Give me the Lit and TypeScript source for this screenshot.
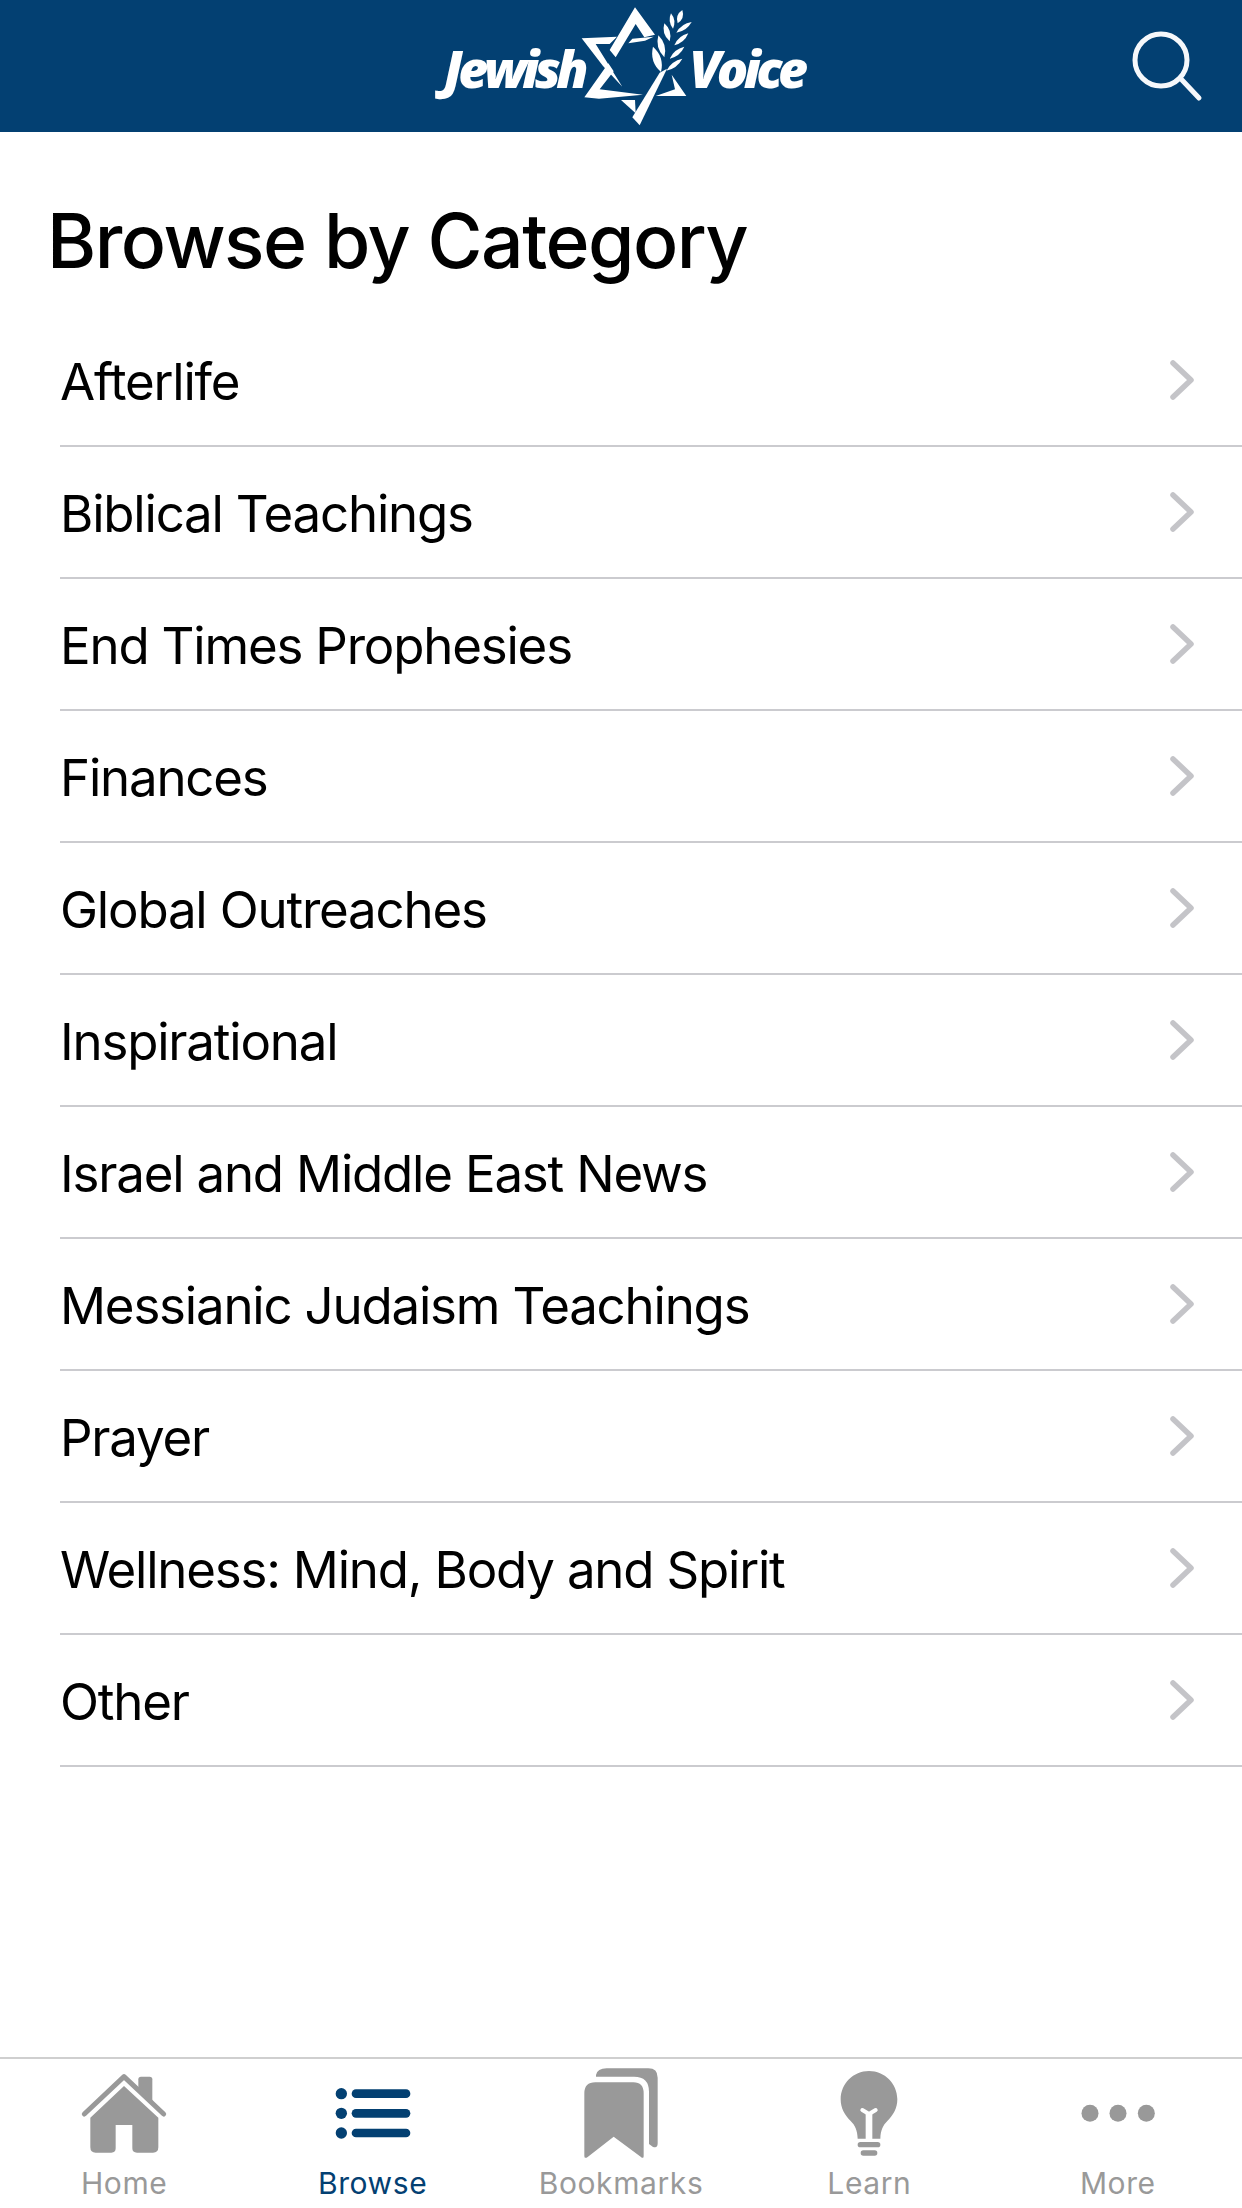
import { LitElement, html, css, svg } from "lit";
import { customElement } from "lit/decorators.js";

const categories = [
  "Afterlife",
  "Biblical Teachings",
  "End Times Prophesies",
  "Finances",
  "Global Outreaches",
  "Inspirational",
  "Israel and Middle East News",
  "Messianic Judaism Teachings",
  "Prayer",
  "Wellness: Mind, Body and Spirit",
  "Other",
];

const tabs = [
  {
    label: "Home",
    box: "229 75 288 288",
    art: svg`<polyline points="254,222 373,110 492,222" fill="none" stroke="currentColor" stroke-width="15" stroke-linecap="round" stroke-linejoin="round"/>
      <path d="M416 150V118Q416 110 424 110H450Q458 110 458 118V190Z"/>
      <path d="M373 138L476 233V322Q476 338 460 338H412Q398 338 398 325V255H348V325Q348 338 335 338H288Q272 338 272 322V233Z"/>`,
  },
  {
    label: "Browse",
    box: "974 75 288 288",
    art: svg`<circle cx="1023" cy="161" r="17"/><circle cx="1023" cy="220" r="17"/><circle cx="1023" cy="279" r="17"/>
      <rect x="1054" y="148" width="176" height="26" rx="13"/><rect x="1054" y="207" width="176" height="26" rx="13"/><rect x="1054" y="266" width="176" height="26" rx="13"/>`,
  },
  {
    label: "Bookmarks",
    box: "279 75 288 288",
    art: svg`<path d="M348 105Q352 85 380 85H505Q533 85 533 113V310Q533 326 518 320L507 312V155Q507 110 462 110H348Z"/>
      <path d="M313 160Q313 127 346 127H460Q491 127 491 160V348Q491 358 482 350L401 290L324 350Q313 358 313 348Z"/>`,
  },
  {
    label: "Learn",
    box: "1026 75 288 288",
    art: svg`<path d="M1170 93C1217 93 1255 131 1255 178C1255 205 1243 225 1225 243C1212 256 1205 270 1204 296H1136C1135 270 1128 256 1115 243C1097 225 1085 205 1085 178C1085 131 1123 93 1170 93Z"/>
      <polyline points="1150,210 1170,222 1190,210" fill="none" stroke="#fff" stroke-width="12" stroke-linecap="round" stroke-linejoin="round"/>
      <rect x="1160" y="220" width="20" height="78" fill="#fff"/>
      <rect x="1136" y="306" width="68" height="16" rx="8"/><rect x="1145" y="331" width="50" height="16" rx="8"/>`,
  },
  {
    label: "More",
    box: "328 75 288 288",
    art: svg`<circle cx="388" cy="220" r="25.5"/><circle cx="472" cy="220" r="25.5"/><circle cx="557" cy="220" r="25.5"/>`,
  },
];

// wheat grains on the logo: from, to, half bulge
const grains = [
  [850, 30, 836, 70, 16],
  [816, 40, 822, 86, 14],
  [878, 66, 832, 98, 14],
  [796, 70, 812, 124, 18],
  [868, 100, 826, 136, 14],
  [778, 106, 796, 172, 20],
  [856, 140, 812, 176, 14],
  [762, 140, 786, 216, 24],
  [850, 176, 802, 212, 14],
];

function grain([x1, y1, x2, y2, w]: number[]) {
  const len = Math.hypot(x2 - x1, y2 - y1);
  const nx = (-(y2 - y1) / len) * w;
  const ny = ((x2 - x1) / len) * w;
  const cx = (x1 + x2) / 2;
  const cy = (y1 + y2) / 2;
  return `M${x1} ${y1}Q${cx + nx} ${cy + ny} ${x2} ${y2}Q${cx - nx} ${cy - ny} ${x1} ${y1}Z`;
}

@customElement("app-root")
export class AppRoot extends LitElement {
  static styles = css`
    :host {
      display: flex;
      flex-direction: column;
      height: 2208px;
      background: #fff;
      font-family: Inter, "Liberation Sans", sans-serif;
      color: #000;
    }
    .header {
      height: 132px;
      flex: none;
      background: #034072;
      display: grid;
      grid-template-columns: 1fr auto 1fr;
      align-items: center;
    }
    .logo {
      grid-column: 2;
      display: flex;
      align-items: center;
      padding-left: 5px;
      color: #fff;
      font-family: "Open Sans", "Liberation Sans", sans-serif;
      font-size: 52px;
      font-weight: 800;
      font-style: italic;
      letter-spacing: -4.5px;
      line-height: 132px;
    }
    .logo svg {
      display: block;
      width: 120px;
      height: 132px;
      flex: none;
    }
    .logo .word {
      position: relative;
      top: 2px;
    }
    .logo .jewish {
      margin-right: -5px;
    }
    .logo .voice {
      margin-left: -10px;
    }
    .search {
      grid-column: 3;
      justify-self: end;
      display: block;
      width: 142px;
      height: 132px;
    }
    .content {
      flex: 1;
    }
    h1 {
      margin: 0;
      height: 183px;
      box-sizing: border-box;
      padding: 64px 0 0 47px;
      font-size: 75px;
      line-height: 90px;
      font-weight: 500;
      letter-spacing: -1.5px;
    }
    .row {
      height: 132px;
      box-sizing: border-box;
      margin-left: 60px;
      padding-right: 46px;
      border-bottom: 2px solid #cbcbcf;
      display: flex;
      align-items: center;
      justify-content: space-between;
      font-size: 51px;
      letter-spacing: -1.2px;
    }
    .row span {
      padding-top: 3px;
    }
    .row svg {
      display: block;
      width: 30px;
      height: 44px;
      flex: none;
    }
    .tabs {
      flex: none;
      height: 151px;
      box-sizing: border-box;
      border-top: 2px solid #cfcfcf;
      display: grid;
      grid-template-columns: repeat(5, 1fr);
    }
    .tab {
      display: flex;
      flex-direction: column;
      align-items: center;
      padding-top: 6px;
      color: #999;
      font-size: 30px;
      line-height: 36px;
      letter-spacing: 0.6px;
    }
    .tab.active {
      color: #034072;
    }
    .tab svg {
      display: block;
      width: 96px;
      height: 96px;
      margin-bottom: 4px;
      fill: currentColor;
    }
  `;

  private logoMark() {
    return html`<svg viewBox="540 0 360 396" fill="#fff" aria-hidden="true">
      <path d="M708 22L768 104L736 112L710 72L650 172L632 150Z" />
      <path d="M628 190L644 214L602 268L732 284L600 296L556 292Z" />
      <path d="M548 115L654 110L632 132L590 132L670 260L612 198Z" />
      <path d="M688 130L700 116L764 110L738 122Z" />
      <path d="M666 300L708 300L710 340Z" />
      <path d="M700 352L782 218L804 206L722 376Z" />
      <path d="M818 224L862 288L770 288L828 268Z" />
      ${grains.map((g) => svg`<path d=${grain(g)} />`)}
    </svg>`;
  }

  render() {
    return html`
      <header class="header">
        <div class="logo">
          <span class="word jewish">Jewish</span>
          ${this.logoMark()}
          <span class="word voice">Voice</span>
        </div>
        <svg class="search" viewBox="0 0 142 132" fill="none" stroke="#f6f8fb" stroke-width="5" stroke-linecap="round">
          <circle cx="61" cy="60" r="26" />
          <path d="M82 80L99 98" />
        </svg>
      </header>
      <main class="content">
        <h1>Browse by Category</h1>
        ${categories.map(
          (name) => html`<div class="row">
            <span>${name}</span>
            <svg viewBox="0 0 30 44" fill="none" stroke="#c4c4c8" stroke-width="5.5" stroke-linecap="round" stroke-linejoin="round">
              <path d="M7 5L25 22L7 39" />
            </svg>
          </div>`
        )}
      </main>
      <nav class="tabs">
        ${tabs.map(
          (t) => html`<div class="tab ${t.label === "Browse" ? "active" : ""}">
            <svg viewBox=${t.box}>${t.art}</svg>
            <span>${t.label}</span>
          </div>`
        )}
      </nav>
    `;
  }
}
